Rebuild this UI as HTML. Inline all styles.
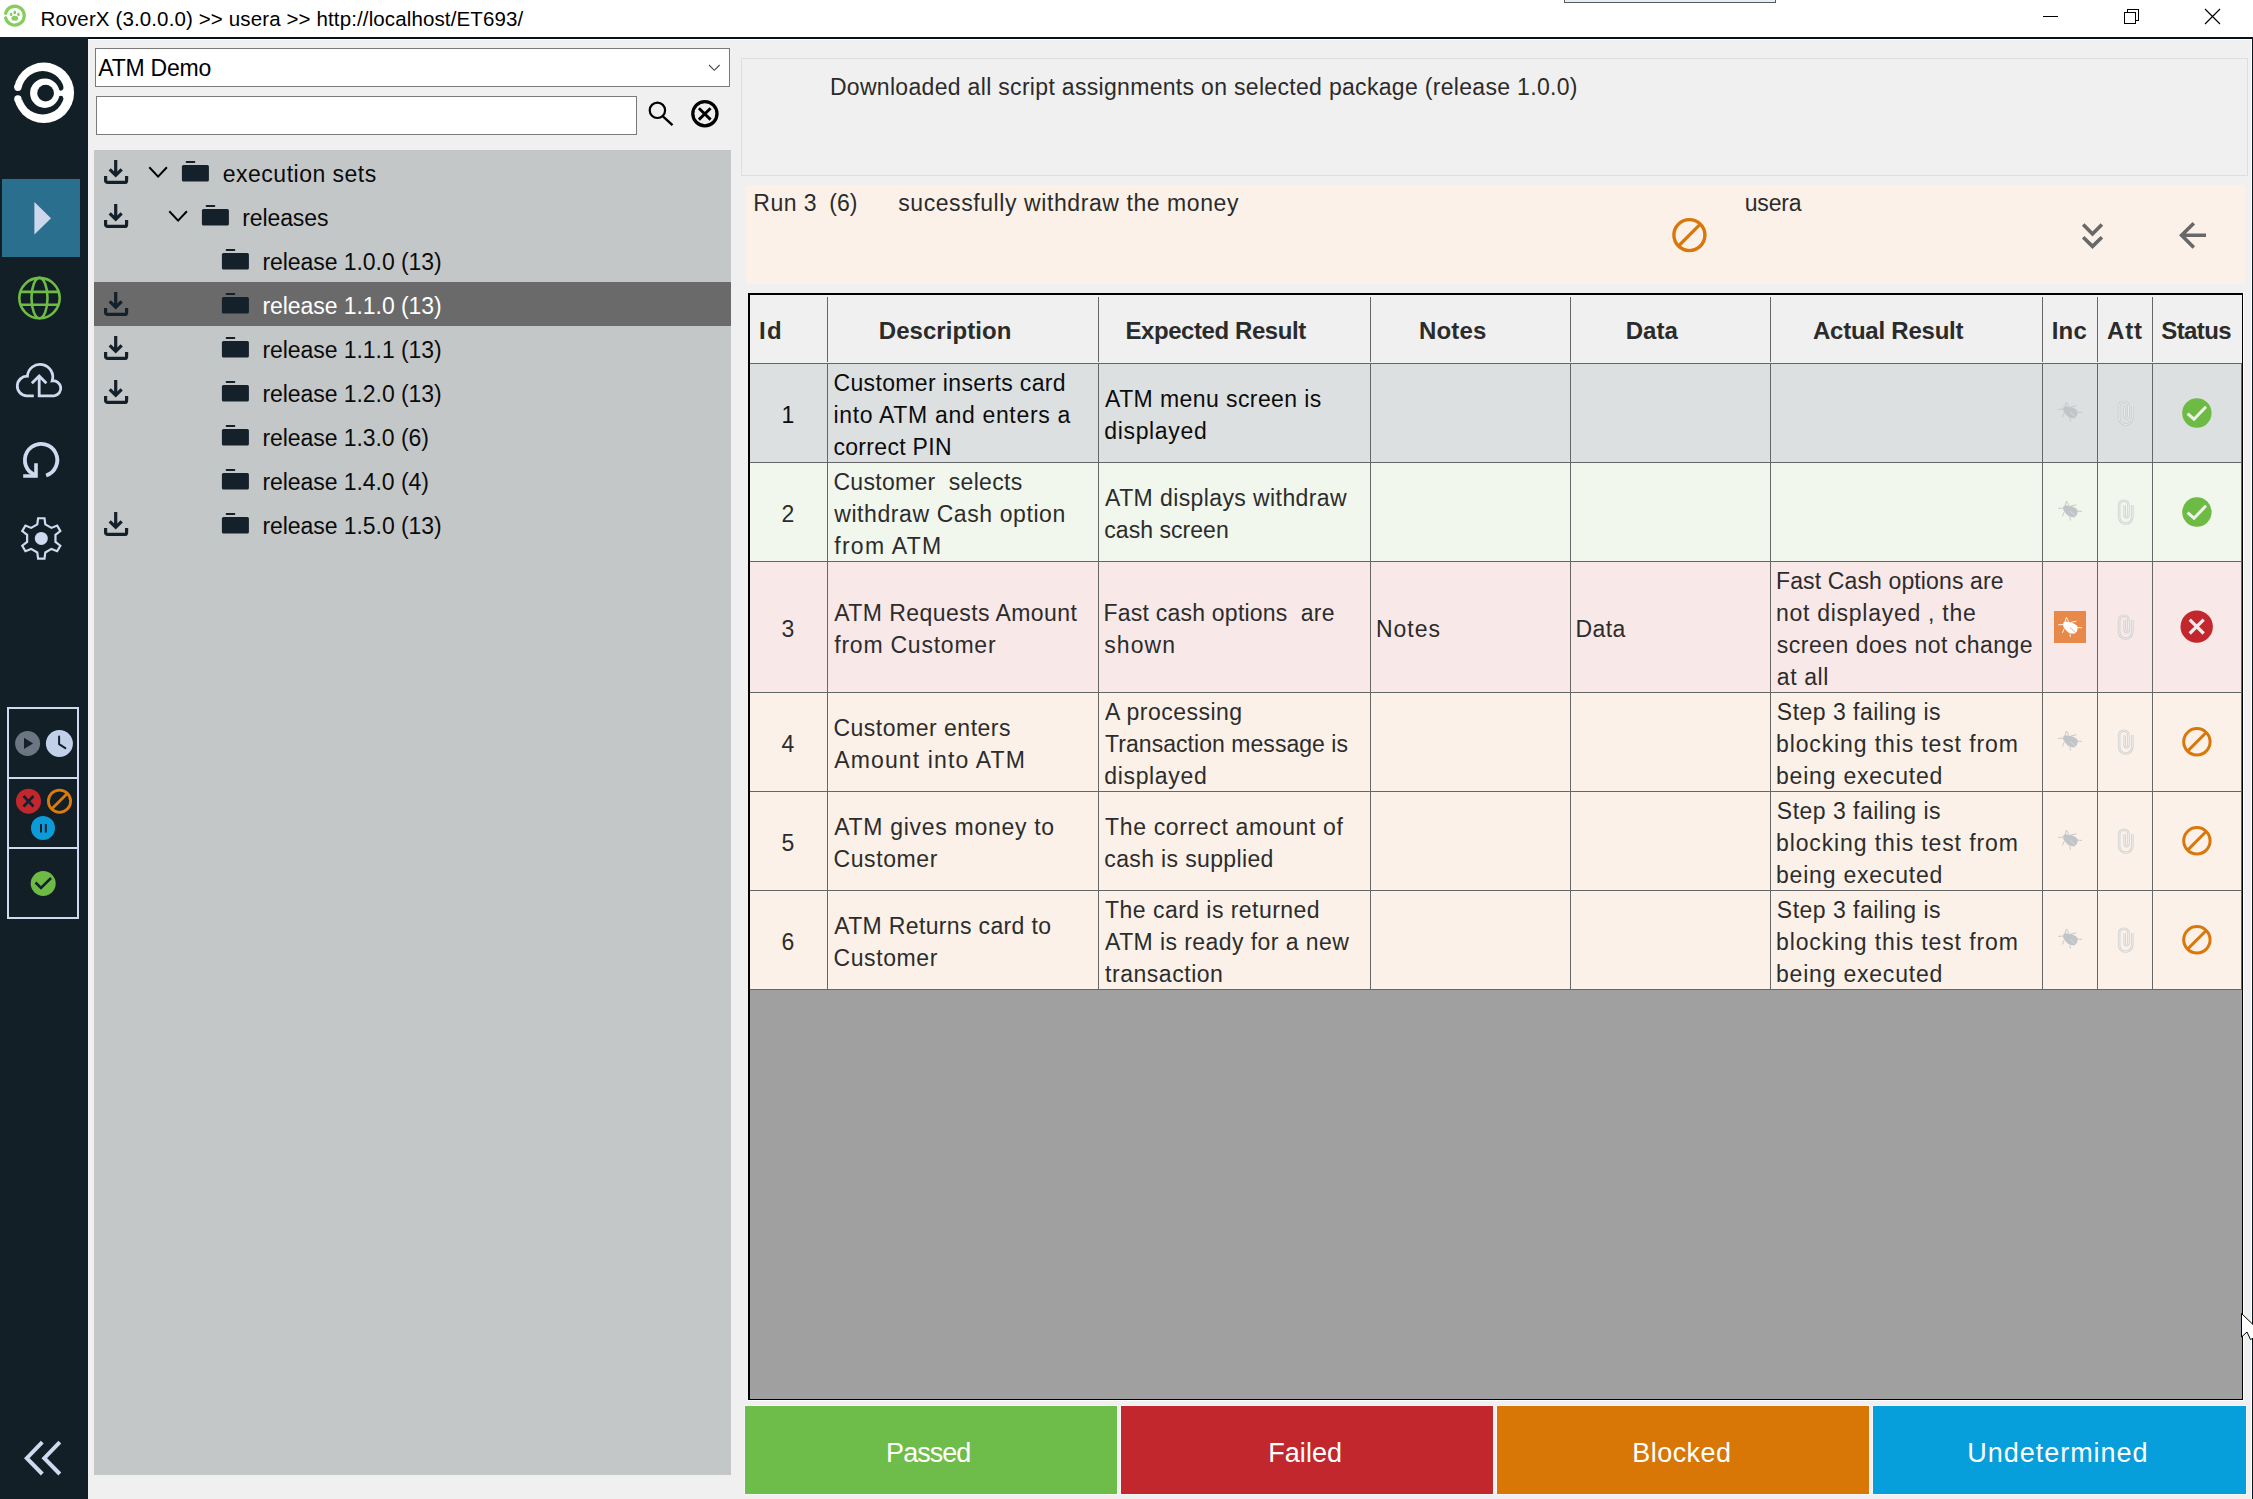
<!DOCTYPE html>
<html lang="en"><head><meta charset="utf-8"><title>RoverX</title>
<style>
html,body{margin:0;padding:0;background:#f0f0f0;}
body{width:2253px;height:1499px;overflow:hidden;font-family:'Liberation Sans',sans-serif;}
#app{position:relative;width:2253px;height:1499px;background:#f0f0f0;overflow:hidden;}
#app div,#app svg{position:absolute;box-sizing:border-box;}
.t{position:absolute;white-space:pre;font-family:'Liberation Sans',sans-serif;}
.vl{width:1px;background:#666;}
.hl{height:1px;background:#666;}

</style></head>
<body>
<div id="app">
<!-- title bar -->
<div style="left:0;top:0;width:2253px;height:37px;background:#fff"></div>
<div style="left:0;top:37px;width:2253px;height:2px;background:#06121b"></div>
<div style="left:88px;top:39px;width:2164px;height:1px;background:#fff"></div>
<div style="left:2251px;top:39px;width:1px;height:1460px;background:#fff"></div>
<div style="left:2252px;top:37px;width:1px;height:1462px;background:#0a161e"></div>
<div style="left:1564px;top:0;width:212px;height:3px;background:#e6eefb;border:1px solid #5a5a5a;border-top:none"></div>
<!-- sidebar -->
<div style="left:0;top:37px;width:88px;height:1462px;background:#131f26"></div>
<div style="left:2px;top:179px;width:78px;height:78px;background:#2b6f8f"></div>
<!-- combo + search -->
<div style="left:95px;top:48px;width:635px;height:39px;background:#fff;border:1px solid #7a7a7a"></div>
<div style="left:96px;top:96px;width:541px;height:39px;background:#fff;border:1px solid #7a7a7a"></div>
<!-- tree panel -->
<div style="left:94px;top:150px;width:637px;height:1325px;background:#c4c7c8"></div>
<div style="left:94px;top:282px;width:637px;height:44px;background:#6a6a6a"></div>
<!-- message panel -->
<div style="left:741px;top:58px;width:1507px;height:118px;border:1px solid #dedede;background:#f0f0f0"></div>
<!-- run panel -->
<div style="left:746px;top:185px;width:1499px;height:99px;background:#fbf1e8"></div>
<!-- grid -->
<div id="grid" style="left:748px;top:293px;width:1495px;height:1107px;background:#a0a0a0;border:1px solid #000;border-left-width:2px;border-top-width:2px"></div>
<div style="left:748px;top:1400px;width:1496px;height:1px;background:#fff"></div>
<div style="left:2243px;top:293px;width:1px;height:1108px;background:#fff"></div>
<div style="left:750px;top:295px;width:1492px;height:68px;background:#f0f0f0"></div>
<div style="left:750px;top:364px;width:1492px;height:98px;background:#dde0e1"></div>
<div style="left:750px;top:463px;width:1492px;height:98px;background:#f1f7ec"></div>
<div style="left:750px;top:562px;width:1492px;height:130px;background:#f8e8e8"></div>
<div style="left:750px;top:693px;width:1492px;height:98px;background:#fbf1e8"></div>
<div style="left:750px;top:792px;width:1492px;height:98px;background:#fbf1e8"></div>
<div style="left:750px;top:891px;width:1492px;height:98px;background:#fbf1e8"></div>
<!-- grid h-lines -->
<div class="hl" style="left:750px;top:363px;width:1492px"></div>
<div class="hl" style="left:750px;top:462px;width:1492px"></div>
<div class="hl" style="left:750px;top:561px;width:1492px"></div>
<div class="hl" style="left:750px;top:692px;width:1492px"></div>
<div class="hl" style="left:750px;top:791px;width:1492px"></div>
<div class="hl" style="left:750px;top:890px;width:1492px"></div>
<div class="hl" style="left:750px;top:989px;width:1492px"></div>
<!-- grid v-lines: header (inset) -->
<div class="vl" style="left:827px;top:297px;height:65px"></div>
<div class="vl" style="left:1098px;top:297px;height:65px"></div>
<div class="vl" style="left:1370px;top:297px;height:65px"></div>
<div class="vl" style="left:1570px;top:297px;height:65px"></div>
<div class="vl" style="left:1770px;top:297px;height:65px"></div>
<div class="vl" style="left:2042px;top:297px;height:65px"></div>
<div class="vl" style="left:2097px;top:297px;height:65px"></div>
<div class="vl" style="left:2152px;top:297px;height:65px"></div>
<!-- grid v-lines: body -->
<div class="vl" style="left:827px;top:364px;height:626px"></div>
<div class="vl" style="left:1098px;top:364px;height:626px"></div>
<div class="vl" style="left:1370px;top:364px;height:626px"></div>
<div class="vl" style="left:1570px;top:364px;height:626px"></div>
<div class="vl" style="left:1770px;top:364px;height:626px"></div>
<div class="vl" style="left:2042px;top:364px;height:626px"></div>
<div class="vl" style="left:2097px;top:364px;height:626px"></div>
<div class="vl" style="left:2152px;top:364px;height:626px"></div>
<div class="vl" style="left:2241px;top:364px;height:626px"></div>
<!-- orange inc square -->
<div style="left:2054px;top:611px;width:32px;height:32px;background:#e8894a"></div>
<!-- buttons -->
<div style="left:745px;top:1406px;width:372px;height:88px;background:#6ebc4a;box-shadow:0 0 0 1px #f8f5f7"></div>
<div style="left:1121px;top:1406px;width:372px;height:88px;background:#c1272d;box-shadow:0 0 0 1px #f8f5f7"></div>
<div style="left:1497px;top:1406px;width:372px;height:88px;background:#d97706;box-shadow:0 0 0 1px #f8f5f7"></div>
<div style="left:1873px;top:1406px;width:373px;height:88px;background:#069edb;box-shadow:0 0 0 1px #f8f5f7"></div>

<svg width="2253" height="1499" viewBox="0 0 2253 1499" style="left:0;top:0">
<path d="M5.68 13.43 A9.4 9.4 0 1 1 5.68 17.97" fill="none" stroke="#86cc5f" stroke-width="3.3" stroke-linecap="round"/>
<g fill="#86cc5f"><ellipse cx="14.8" cy="18.3" rx="3.4" ry="2.5"/><ellipse cx="11.1" cy="14.4" rx="1.3" ry="1.8"/><ellipse cx="14.8" cy="12.4" rx="1.4" ry="1.9"/><ellipse cx="18.4" cy="14.4" rx="1.3" ry="1.8"/></g>
<g stroke="#000" stroke-width="1" fill="none" shape-rendering="crispEdges"><path d="M2043 16.5 H2058"/><rect x="2124.5" y="12.5" width="11" height="11"/><path d="M2127.5 12.5 V9.5 H2138.5 V20.5 H2135.5"/></g>
<path d="M2205 9 L2220 24 M2220 9 L2205 24" stroke="#000" stroke-width="1.2" fill="none"/>
<g>
<circle cx="43.85" cy="92.8" r="30.2" fill="#fff"/>
<circle cx="42.7" cy="92.8" r="21.7" fill="#131f26"/>
<rect x="12" y="87.2" width="10" height="12.4" fill="#131f26"/>
<circle cx="17.9" cy="87.3" r="3.7" fill="#fff"/><circle cx="17.9" cy="98.9" r="3.7" fill="#fff"/>
<path d="M44.8 93.2 L66 86.8 L66 99.6 Z" fill="#fff"/>
<circle cx="60.8" cy="88.2" r="2.45" fill="#131f26"/><circle cx="60.8" cy="98.2" r="2.45" fill="#131f26"/>
<circle cx="44.8" cy="93.2" r="14.7" fill="#fff"/>
<circle cx="45.6" cy="93.2" r="8.35" fill="#131f26"/>
</g>
<path d="M34.4 202 L51 218.2 L34.4 234.4 Z" fill="#cdd8ec"/>
<g fill="none" stroke="#6dbd45" stroke-width="2.6"><circle cx="39.5" cy="298.1" r="20.2"/><ellipse cx="39.5" cy="298.1" rx="8" ry="20.2"/><path d="M20.5 291.9 H58.5 M20.5 304.7 H58.5"/></g>
<path d="M33.8 395.8 H26.8 A9.8 9.8 0 0 1 27.4 376.2 A12.7 12.7 0 1 1 52.2 380.8 A7.5 7.5 0 1 1 54.2 395.8 H39.2 V376.6 M31.8 383.2 L39.2 376 L46.4 383.2" fill="none" stroke="#cfdaf0" stroke-width="2.8" stroke-linejoin="miter"/>
<path d="M46.11 475.51 A16.2 16.2 0 1 0 29.64 471.56 L36 476" fill="none" stroke="#cfdaf0" stroke-width="3.8"/>
<path d="M36 463.2 V476 H23.2" fill="none" stroke="#cfdaf0" stroke-width="3.6" stroke-linecap="butt" stroke-linejoin="miter"/>
<path d="M37.28 524.37 L38.11 518.25 L44.49 518.25 L45.32 524.37 L51.44 527.90 L57.15 525.56 L60.35 531.09 L55.47 534.87 L55.47 541.93 L60.35 545.71 L57.15 551.24 L51.44 548.90 L45.32 552.43 L44.49 558.55 L38.11 558.55 L37.28 552.43 L31.16 548.90 L25.45 551.24 L22.25 545.71 L27.13 541.93 L27.13 534.87 L22.25 531.09 L25.45 525.56 L31.16 527.90 Z" fill="none" stroke="#cfdaf0" stroke-width="2.2" stroke-linejoin="miter"/>
<circle cx="41.3" cy="538.4" r="6.5" fill="#cfdaf0"/>
<g fill="none" stroke="#cfdaf0" stroke-width="2" shape-rendering="crispEdges"><rect x="8" y="708" width="70" height="210"/><path d="M8 778 H78 M8 848 H78"/></g>
<circle cx="27.6" cy="743.5" r="12.5" fill="#6b7682"/><path d="M24 737.8 L33.1 743.5 L24 749.1 Z" fill="#14212a"/>
<circle cx="59.4" cy="743.5" r="13.5" fill="#c3d0ea"/><path d="M59.1 736.4 V744.2 L65.3 748.2" fill="none" stroke="#14212a" stroke-width="2" stroke-linecap="round" stroke-linejoin="round"/>
<circle cx="28.5" cy="801.2" r="12.5" fill="#c1272d"/><path d="M23.5 796 L33.5 806.5 M33.5 796 L23.5 806.5" stroke="#14212a" stroke-width="2.6" fill="none"/>
<circle cx="59.5" cy="801.2" r="11.1" fill="none" stroke="#dc7a0a" stroke-width="2.8"/><path d="M51.7 809 L67.3 793.4" stroke="#dc7a0a" stroke-width="2.8"/>
<circle cx="43" cy="828" r="12" fill="#0a9bd8"/><path d="M41 824 V832.5 M45.8 824 V832.5" stroke="#14212a" stroke-width="2" fill="none"/>
<circle cx="43.2" cy="883.5" r="12.5" fill="#6dbb45"/><path d="M35.5 882.5 L41 888 L51 878" stroke="#14212a" stroke-width="2.6" fill="none"/>
<path d="M42.3 1442.2 L26.8 1458.2 L42.3 1474 M59.8 1442.2 L44.3 1458.2 L59.8 1474" fill="none" stroke="#cfdaf0" stroke-width="4" stroke-linejoin="miter"/>
<path d="M709 65 L714.3 70.3 L719.6 65" fill="none" stroke="#444" stroke-width="1.1"/>
<circle cx="657.4" cy="110.3" r="7.7" fill="none" stroke="#000" stroke-width="2.2"/><path d="M662.9 116.3 L672.5 125.1" stroke="#000" stroke-width="2.4"/>
<circle cx="704.9" cy="113.7" r="12.1" fill="none" stroke="#000" stroke-width="3.3"/><path d="M698.9 108.2 L710.6 119.6 M710.6 108.2 L698.9 119.6" stroke="#000" stroke-width="2.9"/>
<g fill="none" stroke="#14212a" stroke-width="3.2" transform="translate(104 160)"><path d="M11.7 0 V15"/><path d="M5.7 9.4 L11.7 15.2 L17.7 9.4"/><path d="M1.6 15.9 V20.4 a2 2 0 0 0 2 2 H20.6 a2 2 0 0 0 2 -2 V15.9"/></g>
<g fill="none" stroke="#14212a" stroke-width="3.2" transform="translate(104 204)"><path d="M11.7 0 V15"/><path d="M5.7 9.4 L11.7 15.2 L17.7 9.4"/><path d="M1.6 15.9 V20.4 a2 2 0 0 0 2 2 H20.6 a2 2 0 0 0 2 -2 V15.9"/></g>
<g fill="none" stroke="#14212a" stroke-width="3.2" transform="translate(104 292)"><path d="M11.7 0 V15"/><path d="M5.7 9.4 L11.7 15.2 L17.7 9.4"/><path d="M1.6 15.9 V20.4 a2 2 0 0 0 2 2 H20.6 a2 2 0 0 0 2 -2 V15.9"/></g>
<g fill="none" stroke="#14212a" stroke-width="3.2" transform="translate(104 336)"><path d="M11.7 0 V15"/><path d="M5.7 9.4 L11.7 15.2 L17.7 9.4"/><path d="M1.6 15.9 V20.4 a2 2 0 0 0 2 2 H20.6 a2 2 0 0 0 2 -2 V15.9"/></g>
<g fill="none" stroke="#14212a" stroke-width="3.2" transform="translate(104 380)"><path d="M11.7 0 V15"/><path d="M5.7 9.4 L11.7 15.2 L17.7 9.4"/><path d="M1.6 15.9 V20.4 a2 2 0 0 0 2 2 H20.6 a2 2 0 0 0 2 -2 V15.9"/></g>
<g fill="none" stroke="#14212a" stroke-width="3.2" transform="translate(104 512)"><path d="M11.7 0 V15"/><path d="M5.7 9.4 L11.7 15.2 L17.7 9.4"/><path d="M1.6 15.9 V20.4 a2 2 0 0 0 2 2 H20.6 a2 2 0 0 0 2 -2 V15.9"/></g>
<path d="M149.3 167.3 L158.10000000000002 176.60000000000002 L166.9 167.3" fill="none" stroke="#000" stroke-width="2"/>
<path d="M169.3 211.3 L178.10000000000002 220.60000000000002 L186.9 211.3" fill="none" stroke="#000" stroke-width="2"/>
<rect x="181.9" y="164.9" width="27" height="16.7" rx="1.6" fill="#14212a"/><rect x="185.6" y="161.0" width="9.7" height="2.1" rx="1" fill="#14212a"/>
<rect x="201.9" y="208.9" width="27" height="16.7" rx="1.6" fill="#14212a"/><rect x="205.6" y="205.0" width="9.7" height="2.1" rx="1" fill="#14212a"/>
<rect x="221.9" y="252.9" width="27" height="16.7" rx="1.6" fill="#14212a"/><rect x="225.6" y="249.0" width="9.7" height="2.1" rx="1" fill="#14212a"/>
<rect x="221.9" y="296.9" width="27" height="16.7" rx="1.6" fill="#14212a"/><rect x="225.6" y="293.0" width="9.7" height="2.1" rx="1" fill="#14212a"/>
<rect x="221.9" y="340.9" width="27" height="16.7" rx="1.6" fill="#14212a"/><rect x="225.6" y="337.0" width="9.7" height="2.1" rx="1" fill="#14212a"/>
<rect x="221.9" y="384.9" width="27" height="16.7" rx="1.6" fill="#14212a"/><rect x="225.6" y="381.0" width="9.7" height="2.1" rx="1" fill="#14212a"/>
<rect x="221.9" y="428.9" width="27" height="16.7" rx="1.6" fill="#14212a"/><rect x="225.6" y="425.0" width="9.7" height="2.1" rx="1" fill="#14212a"/>
<rect x="221.9" y="472.9" width="27" height="16.7" rx="1.6" fill="#14212a"/><rect x="225.6" y="469.0" width="9.7" height="2.1" rx="1" fill="#14212a"/>
<rect x="221.9" y="516.9" width="27" height="16.7" rx="1.6" fill="#14212a"/><rect x="225.6" y="513.0" width="9.7" height="2.1" rx="1" fill="#14212a"/>
<circle cx="1689.4" cy="235.1" r="15.5" fill="none" stroke="#d9770a" stroke-width="3.4"/><path d="M1678.5 246 L1700.3 224.2" stroke="#d9770a" stroke-width="3.2"/>
<path d="M2083.2 224.4 L2092.5 234 L2101.9 224.4 M2083.2 237.3 L2092.5 246.4 L2101.9 237.3" fill="none" stroke="#686868" stroke-width="3.6"/>
<path d="M2193.8 223.2 L2181.6 235.3 L2193.8 247.5 M2181.6 235.3 H2206" fill="none" stroke="#686868" stroke-width="3.6"/>
<g transform="translate(2070.3 411.8)"><path d="M-7 -4 Q-6.5 -5.8 -5.2 -5.6 Q-2 -5.6 0.6 -4.7 Q3.5 -3.8 5.9 -2.3 Q7.4 -1.2 7.6 0.4 L6.6 4.2 L3.9 6.6 Q0.5 6.5 -1.6 5.5 Q-4 3.8 -5.6 1.3 Q-7 -0.6 -7.2 -1.8 Z" fill="#c2c5c7"/><path d="M-5.2 -5.4 L-3.9 -9.8 L-1.6 -5.8 M0.6 -4.9 L6.1 -6 M7.5 0.4 L11.7 0.6 M-0.3 6.4 L0.1 9.9 M-6.1 1.3 L-7.9 5.7 M-7.2 -2.7 L-12.1 -2.4" fill="none" stroke="#c2c5c7" stroke-width="0.9"/><path d="M-0.3 0.4 L4.6 4.8" stroke="rgba(255,255,255,0.45)" stroke-width="0.7" fill="none"/></g>
<path d="M2132.3 406.09999999999997 V417.9 a6.6 6.6 0 0 1 -13.2 0 V406.3 a4.7 4.7 0 0 1 9.4 0 V416.3 a1.9 1.9 0 0 1 -3.8 0 V406.3" fill="none" stroke="#c4c4c4" stroke-width="2.5" opacity="0.75"/><path d="M2132.3 406.09999999999997 V417.9 a6.6 6.6 0 0 1 -13.2 0 V406.3 a4.7 4.7 0 0 1 9.4 0 V416.3 a1.9 1.9 0 0 1 -3.8 0 V406.3" fill="none" stroke="#f4f4f4" stroke-width="0.9" opacity="0.9"/>
<g transform="translate(2070.3 510.8)"><path d="M-7 -4 Q-6.5 -5.8 -5.2 -5.6 Q-2 -5.6 0.6 -4.7 Q3.5 -3.8 5.9 -2.3 Q7.4 -1.2 7.6 0.4 L6.6 4.2 L3.9 6.6 Q0.5 6.5 -1.6 5.5 Q-4 3.8 -5.6 1.3 Q-7 -0.6 -7.2 -1.8 Z" fill="#c2c5c7"/><path d="M-5.2 -5.4 L-3.9 -9.8 L-1.6 -5.8 M0.6 -4.9 L6.1 -6 M7.5 0.4 L11.7 0.6 M-0.3 6.4 L0.1 9.9 M-6.1 1.3 L-7.9 5.7 M-7.2 -2.7 L-12.1 -2.4" fill="none" stroke="#c2c5c7" stroke-width="0.9"/><path d="M-0.3 0.4 L4.6 4.8" stroke="rgba(255,255,255,0.45)" stroke-width="0.7" fill="none"/></g>
<path d="M2132.3 505.09999999999997 V516.9 a6.6 6.6 0 0 1 -13.2 0 V505.3 a4.7 4.7 0 0 1 9.4 0 V515.3 a1.9 1.9 0 0 1 -3.8 0 V505.3" fill="none" stroke="#c4c4c4" stroke-width="2.5" opacity="0.75"/><path d="M2132.3 505.09999999999997 V516.9 a6.6 6.6 0 0 1 -13.2 0 V505.3 a4.7 4.7 0 0 1 9.4 0 V515.3 a1.9 1.9 0 0 1 -3.8 0 V505.3" fill="none" stroke="#f4f4f4" stroke-width="0.9" opacity="0.9"/>
<g transform="translate(2070.3 627.2)"><path d="M-7 -4 Q-6.5 -5.8 -5.2 -5.6 Q-2 -5.6 0.6 -4.7 Q3.5 -3.8 5.9 -2.3 Q7.4 -1.2 7.6 0.4 L6.6 4.2 L3.9 6.6 Q0.5 6.5 -1.6 5.5 Q-4 3.8 -5.6 1.3 Q-7 -0.6 -7.2 -1.8 Z" fill="#ffffff"/><path d="M-5.2 -5.4 L-3.9 -9.8 L-1.6 -5.8 M0.6 -4.9 L6.1 -6 M7.5 0.4 L11.7 0.6 M-0.3 6.4 L0.1 9.9 M-6.1 1.3 L-7.9 5.7 M-7.2 -2.7 L-12.1 -2.4" fill="none" stroke="#ffffff" stroke-width="0.9"/><path d="M-0.3 0.4 L4.6 4.8" stroke="#e8894a" stroke-width="0.7" fill="none"/></g>
<path d="M2132.3 620.1 V631.9000000000001 a6.6 6.6 0 0 1 -13.2 0 V620.3000000000001 a4.7 4.7 0 0 1 9.4 0 V630.3000000000001 a1.9 1.9 0 0 1 -3.8 0 V620.3000000000001" fill="none" stroke="#c4c4c4" stroke-width="2.5" opacity="0.75"/><path d="M2132.3 620.1 V631.9000000000001 a6.6 6.6 0 0 1 -13.2 0 V620.3000000000001 a4.7 4.7 0 0 1 9.4 0 V630.3000000000001 a1.9 1.9 0 0 1 -3.8 0 V620.3000000000001" fill="none" stroke="#f4f4f4" stroke-width="0.9" opacity="0.9"/>
<g transform="translate(2070.3 740.8)"><path d="M-7 -4 Q-6.5 -5.8 -5.2 -5.6 Q-2 -5.6 0.6 -4.7 Q3.5 -3.8 5.9 -2.3 Q7.4 -1.2 7.6 0.4 L6.6 4.2 L3.9 6.6 Q0.5 6.5 -1.6 5.5 Q-4 3.8 -5.6 1.3 Q-7 -0.6 -7.2 -1.8 Z" fill="#c2c5c7"/><path d="M-5.2 -5.4 L-3.9 -9.8 L-1.6 -5.8 M0.6 -4.9 L6.1 -6 M7.5 0.4 L11.7 0.6 M-0.3 6.4 L0.1 9.9 M-6.1 1.3 L-7.9 5.7 M-7.2 -2.7 L-12.1 -2.4" fill="none" stroke="#c2c5c7" stroke-width="0.9"/><path d="M-0.3 0.4 L4.6 4.8" stroke="rgba(255,255,255,0.45)" stroke-width="0.7" fill="none"/></g>
<path d="M2132.3 735.1 V746.9000000000001 a6.6 6.6 0 0 1 -13.2 0 V735.3000000000001 a4.7 4.7 0 0 1 9.4 0 V745.3000000000001 a1.9 1.9 0 0 1 -3.8 0 V735.3000000000001" fill="none" stroke="#c4c4c4" stroke-width="2.5" opacity="0.75"/><path d="M2132.3 735.1 V746.9000000000001 a6.6 6.6 0 0 1 -13.2 0 V735.3000000000001 a4.7 4.7 0 0 1 9.4 0 V745.3000000000001 a1.9 1.9 0 0 1 -3.8 0 V735.3000000000001" fill="none" stroke="#f4f4f4" stroke-width="0.9" opacity="0.9"/>
<g transform="translate(2070.3 839.8)"><path d="M-7 -4 Q-6.5 -5.8 -5.2 -5.6 Q-2 -5.6 0.6 -4.7 Q3.5 -3.8 5.9 -2.3 Q7.4 -1.2 7.6 0.4 L6.6 4.2 L3.9 6.6 Q0.5 6.5 -1.6 5.5 Q-4 3.8 -5.6 1.3 Q-7 -0.6 -7.2 -1.8 Z" fill="#c2c5c7"/><path d="M-5.2 -5.4 L-3.9 -9.8 L-1.6 -5.8 M0.6 -4.9 L6.1 -6 M7.5 0.4 L11.7 0.6 M-0.3 6.4 L0.1 9.9 M-6.1 1.3 L-7.9 5.7 M-7.2 -2.7 L-12.1 -2.4" fill="none" stroke="#c2c5c7" stroke-width="0.9"/><path d="M-0.3 0.4 L4.6 4.8" stroke="rgba(255,255,255,0.45)" stroke-width="0.7" fill="none"/></g>
<path d="M2132.3 834.1 V845.9000000000001 a6.6 6.6 0 0 1 -13.2 0 V834.3000000000001 a4.7 4.7 0 0 1 9.4 0 V844.3000000000001 a1.9 1.9 0 0 1 -3.8 0 V834.3000000000001" fill="none" stroke="#c4c4c4" stroke-width="2.5" opacity="0.75"/><path d="M2132.3 834.1 V845.9000000000001 a6.6 6.6 0 0 1 -13.2 0 V834.3000000000001 a4.7 4.7 0 0 1 9.4 0 V844.3000000000001 a1.9 1.9 0 0 1 -3.8 0 V834.3000000000001" fill="none" stroke="#f4f4f4" stroke-width="0.9" opacity="0.9"/>
<g transform="translate(2070.3 938.8)"><path d="M-7 -4 Q-6.5 -5.8 -5.2 -5.6 Q-2 -5.6 0.6 -4.7 Q3.5 -3.8 5.9 -2.3 Q7.4 -1.2 7.6 0.4 L6.6 4.2 L3.9 6.6 Q0.5 6.5 -1.6 5.5 Q-4 3.8 -5.6 1.3 Q-7 -0.6 -7.2 -1.8 Z" fill="#c2c5c7"/><path d="M-5.2 -5.4 L-3.9 -9.8 L-1.6 -5.8 M0.6 -4.9 L6.1 -6 M7.5 0.4 L11.7 0.6 M-0.3 6.4 L0.1 9.9 M-6.1 1.3 L-7.9 5.7 M-7.2 -2.7 L-12.1 -2.4" fill="none" stroke="#c2c5c7" stroke-width="0.9"/><path d="M-0.3 0.4 L4.6 4.8" stroke="rgba(255,255,255,0.45)" stroke-width="0.7" fill="none"/></g>
<path d="M2132.3 933.1 V944.9000000000001 a6.6 6.6 0 0 1 -13.2 0 V933.3000000000001 a4.7 4.7 0 0 1 9.4 0 V943.3000000000001 a1.9 1.9 0 0 1 -3.8 0 V933.3000000000001" fill="none" stroke="#c4c4c4" stroke-width="2.5" opacity="0.75"/><path d="M2132.3 933.1 V944.9000000000001 a6.6 6.6 0 0 1 -13.2 0 V933.3000000000001 a4.7 4.7 0 0 1 9.4 0 V943.3000000000001 a1.9 1.9 0 0 1 -3.8 0 V933.3000000000001" fill="none" stroke="#f4f4f4" stroke-width="0.9" opacity="0.9"/>
<circle cx="2196.9" cy="413" r="14.7" fill="#6dbb45"/><path d="M2187.6 413.6 L2194 419.2 L2206 406.8" fill="none" stroke="#eef4ea" stroke-width="3"/>
<circle cx="2196.9" cy="512" r="14.7" fill="#6dbb45"/><path d="M2187.6 512.6 L2194 518.2 L2206 505.8" fill="none" stroke="#eef4ea" stroke-width="3"/>
<circle cx="2196.7" cy="626.6" r="16.2" fill="#c1272d"/><path d="M2189.7 619.7 L2203.7 633.5 M2203.7 619.7 L2189.7 633.5" stroke="#f7eaea" stroke-width="3.2" fill="none"/>
<circle cx="2196.9" cy="741.8" r="13.2" fill="none" stroke="#d9770a" stroke-width="3"/><path d="M2187.6 751.0999999999999 L2206.2 732.5" stroke="#d9770a" stroke-width="3"/>
<circle cx="2196.9" cy="840.8" r="13.2" fill="none" stroke="#d9770a" stroke-width="3"/><path d="M2187.6 850.0999999999999 L2206.2 831.5" stroke="#d9770a" stroke-width="3"/>
<circle cx="2196.9" cy="939.8" r="13.2" fill="none" stroke="#d9770a" stroke-width="3"/><path d="M2187.6 949.0999999999999 L2206.2 930.5" stroke="#d9770a" stroke-width="3"/>
<path d="M2241.5 1313.5 V1337 L2247 1332 L2250.5 1339.5 L2253.5 1338 V1325 Z" fill="#fff" stroke="#000" stroke-width="1"/>
</svg>
<span class="t" style="left:40.54px;top:9px;font-size:20.5px;line-height:20.5px;color:#000;letter-spacing:0.125px;">RoverX (3.0.0.0) &gt;&gt; usera &gt;&gt; http://localhost/ET693/</span>
<span class="t" style="left:98.24px;top:57px;font-size:23px;line-height:23px;color:#000;letter-spacing:-0.229px;">ATM Demo</span>
<span class="t" style="left:222.82px;top:163px;font-size:23px;line-height:23px;color:#0b0b0b;letter-spacing:0.492px;">execution sets</span>
<span class="t" style="left:242.30px;top:207px;font-size:23px;line-height:23px;color:#0b0b0b;letter-spacing:-0.114px;">releases</span>
<span class="t" style="left:262.40px;top:251px;font-size:23px;line-height:23px;color:#0b0b0b;letter-spacing:-0.056px;">release 1.0.0 (13)</span>
<span class="t" style="left:262.40px;top:295px;font-size:23px;line-height:23px;color:#ffffff;letter-spacing:-0.056px;">release 1.1.0 (13)</span>
<span class="t" style="left:262.40px;top:339px;font-size:23px;line-height:23px;color:#0b0b0b;letter-spacing:-0.056px;">release 1.1.1 (13)</span>
<span class="t" style="left:262.40px;top:383px;font-size:23px;line-height:23px;color:#0b0b0b;letter-spacing:-0.056px;">release 1.2.0 (13)</span>
<span class="t" style="left:262.40px;top:427px;font-size:23px;line-height:23px;color:#0b0b0b;letter-spacing:-0.060px;">release 1.3.0 (6)</span>
<span class="t" style="left:262.40px;top:471px;font-size:23px;line-height:23px;color:#0b0b0b;letter-spacing:-0.060px;">release 1.4.0 (4)</span>
<span class="t" style="left:262.40px;top:515px;font-size:23px;line-height:23px;color:#0b0b0b;letter-spacing:-0.056px;">release 1.5.0 (13)</span>
<span class="t" style="left:829.88px;top:76px;font-size:23px;line-height:23px;color:#2b2b2b;letter-spacing:0.315px;">Downloaded all script assignments on selected package (release 1.0.0)</span>
<span class="t" style="left:753.36px;top:192px;font-size:23px;line-height:23px;color:#2b2b2b;letter-spacing:0.460px;">Run 3</span>
<span class="t" style="left:829.30px;top:192px;font-size:23px;line-height:23px;color:#2b2b2b;">(6)</span>
<span class="t" style="left:898.20px;top:192px;font-size:23px;line-height:23px;color:#2b2b2b;letter-spacing:0.582px;">sucessfully withdraw the money</span>
<span class="t" style="left:1744.78px;top:192px;font-size:23px;line-height:23px;color:#2b2b2b;letter-spacing:-0.200px;">usera</span>
<span class="t" style="left:758.92px;top:319px;font-size:24px;line-height:24px;color:#2b2b2b;font-weight:700;letter-spacing:1.500px;">Id</span>
<span class="t" style="left:878.78px;top:319px;font-size:24px;line-height:24px;color:#2b2b2b;font-weight:700;letter-spacing:0.056px;">Description</span>
<span class="t" style="left:1125.40px;top:319px;font-size:24px;line-height:24px;color:#2b2b2b;font-weight:700;letter-spacing:-0.417px;">Expected Result</span>
<span class="t" style="left:1418.92px;top:319px;font-size:24px;line-height:24px;color:#2b2b2b;font-weight:700;letter-spacing:0.220px;">Notes</span>
<span class="t" style="left:1625.64px;top:319px;font-size:24px;line-height:24px;color:#2b2b2b;font-weight:700;letter-spacing:0.080px;">Data</span>
<span class="t" style="left:1812.96px;top:319px;font-size:24px;line-height:24px;color:#2b2b2b;font-weight:700;letter-spacing:-0.233px;">Actual Result</span>
<span class="t" style="left:2051.64px;top:319px;font-size:24px;line-height:24px;color:#2b2b2b;font-weight:700;letter-spacing:0.280px;">Inc</span>
<span class="t" style="left:2107.10px;top:319px;font-size:24px;line-height:24px;color:#2b2b2b;font-weight:700;letter-spacing:0.800px;">Att</span>
<span class="t" style="left:2161.30px;top:319px;font-size:24px;line-height:24px;color:#2b2b2b;font-weight:700;letter-spacing:-0.624px;">Status</span>
<span class="t" style="left:788.00px;top:404px;font-size:23px;line-height:23px;color:#0c0c0c;transform:translateX(-50%);">1</span>
<span class="t" style="left:788.00px;top:503px;font-size:23px;line-height:23px;color:#2c2c2c;transform:translateX(-50%);">2</span>
<span class="t" style="left:788.00px;top:618px;font-size:23px;line-height:23px;color:#2c2c2c;transform:translateX(-50%);">3</span>
<span class="t" style="left:788.00px;top:733px;font-size:23px;line-height:23px;color:#2c2c2c;transform:translateX(-50%);">4</span>
<span class="t" style="left:788.00px;top:832px;font-size:23px;line-height:23px;color:#2c2c2c;transform:translateX(-50%);">5</span>
<span class="t" style="left:788.00px;top:931px;font-size:23px;line-height:23px;color:#2c2c2c;transform:translateX(-50%);">6</span>
<span class="t" style="left:833.44px;top:372px;font-size:23px;line-height:23px;color:#0c0c0c;letter-spacing:0.360px;">Customer inserts card</span>
<span class="t" style="left:833.44px;top:404px;font-size:23px;line-height:23px;color:#0c0c0c;letter-spacing:0.676px;">into ATM and enters a</span>
<span class="t" style="left:833.44px;top:436px;font-size:23px;line-height:23px;color:#0c0c0c;letter-spacing:0.312px;">correct PIN</span>
<span class="t" style="left:1105.10px;top:388px;font-size:23px;line-height:23px;color:#0c0c0c;letter-spacing:0.414px;">ATM menu screen is</span>
<span class="t" style="left:1104.30px;top:420px;font-size:23px;line-height:23px;color:#0c0c0c;letter-spacing:0.650px;">displayed</span>
<span class="t" style="left:833.44px;top:471px;font-size:23px;line-height:23px;color:#2c2c2c;letter-spacing:0.290px;">Customer  selects</span>
<span class="t" style="left:834.24px;top:503px;font-size:23px;line-height:23px;color:#2c2c2c;letter-spacing:0.585px;">withdraw Cash option</span>
<span class="t" style="left:834.24px;top:535px;font-size:23px;line-height:23px;color:#2c2c2c;letter-spacing:1.291px;">from ATM</span>
<span class="t" style="left:1105.10px;top:487px;font-size:23px;line-height:23px;color:#2c2c2c;letter-spacing:0.404px;">ATM displays withdraw</span>
<span class="t" style="left:1104.30px;top:519px;font-size:23px;line-height:23px;color:#2c2c2c;letter-spacing:0.040px;">cash screen</span>
<span class="t" style="left:834.24px;top:602px;font-size:23px;line-height:23px;color:#2c2c2c;letter-spacing:0.440px;">ATM Requests Amount</span>
<span class="t" style="left:834.24px;top:634px;font-size:23px;line-height:23px;color:#2c2c2c;letter-spacing:0.773px;">from Customer</span>
<span class="t" style="left:1103.50px;top:602px;font-size:23px;line-height:23px;color:#2c2c2c;letter-spacing:0.225px;">Fast cash options  are</span>
<span class="t" style="left:1104.30px;top:634px;font-size:23px;line-height:23px;color:#2c2c2c;letter-spacing:1.040px;">shown</span>
<span class="t" style="left:1375.88px;top:618px;font-size:23px;line-height:23px;color:#2c2c2c;letter-spacing:1.040px;">Notes</span>
<span class="t" style="left:1575.50px;top:618px;font-size:23px;line-height:23px;color:#2c2c2c;letter-spacing:0.427px;">Data</span>
<span class="t" style="left:1776.02px;top:570px;font-size:23px;line-height:23px;color:#2c2c2c;letter-spacing:0.128px;">Fast Cash options are</span>
<span class="t" style="left:1776.02px;top:602px;font-size:23px;line-height:23px;color:#2c2c2c;letter-spacing:0.724px;">not displayed , the</span>
<span class="t" style="left:1776.82px;top:634px;font-size:23px;line-height:23px;color:#2c2c2c;letter-spacing:0.491px;">screen does not change</span>
<span class="t" style="left:1776.82px;top:666px;font-size:23px;line-height:23px;color:#2c2c2c;letter-spacing:0.592px;">at all</span>
<span class="t" style="left:833.44px;top:717px;font-size:23px;line-height:23px;color:#2c2c2c;letter-spacing:0.503px;">Customer enters</span>
<span class="t" style="left:834.24px;top:749px;font-size:23px;line-height:23px;color:#2c2c2c;letter-spacing:1.137px;">Amount into ATM</span>
<span class="t" style="left:1105.10px;top:701px;font-size:23px;line-height:23px;color:#2c2c2c;letter-spacing:0.480px;">A processing</span>
<span class="t" style="left:1105.10px;top:733px;font-size:23px;line-height:23px;color:#2c2c2c;letter-spacing:0.042px;">Transaction message is</span>
<span class="t" style="left:1104.30px;top:765px;font-size:23px;line-height:23px;color:#2c2c2c;letter-spacing:0.650px;">displayed</span>
<span class="t" style="left:1776.82px;top:701px;font-size:23px;line-height:23px;color:#2c2c2c;letter-spacing:0.480px;">Step 3 failing is</span>
<span class="t" style="left:1776.02px;top:733px;font-size:23px;line-height:23px;color:#2c2c2c;letter-spacing:0.880px;">blocking this test from</span>
<span class="t" style="left:1776.02px;top:765px;font-size:23px;line-height:23px;color:#2c2c2c;letter-spacing:0.788px;">being executed</span>
<span class="t" style="left:834.24px;top:816px;font-size:23px;line-height:23px;color:#2c2c2c;letter-spacing:0.706px;">ATM gives money to</span>
<span class="t" style="left:833.44px;top:848px;font-size:23px;line-height:23px;color:#2c2c2c;letter-spacing:0.606px;">Customer</span>
<span class="t" style="left:1105.10px;top:816px;font-size:23px;line-height:23px;color:#2c2c2c;letter-spacing:0.640px;">The correct amount of</span>
<span class="t" style="left:1104.30px;top:848px;font-size:23px;line-height:23px;color:#2c2c2c;letter-spacing:0.363px;">cash is supplied</span>
<span class="t" style="left:1776.82px;top:800px;font-size:23px;line-height:23px;color:#2c2c2c;letter-spacing:0.480px;">Step 3 failing is</span>
<span class="t" style="left:1776.02px;top:832px;font-size:23px;line-height:23px;color:#2c2c2c;letter-spacing:0.880px;">blocking this test from</span>
<span class="t" style="left:1776.02px;top:864px;font-size:23px;line-height:23px;color:#2c2c2c;letter-spacing:0.788px;">being executed</span>
<span class="t" style="left:834.24px;top:915px;font-size:23px;line-height:23px;color:#2c2c2c;letter-spacing:0.347px;">ATM Returns card to</span>
<span class="t" style="left:833.44px;top:947px;font-size:23px;line-height:23px;color:#2c2c2c;letter-spacing:0.606px;">Customer</span>
<span class="t" style="left:1105.10px;top:899px;font-size:23px;line-height:23px;color:#2c2c2c;letter-spacing:0.455px;">The card is returned</span>
<span class="t" style="left:1105.10px;top:931px;font-size:23px;line-height:23px;color:#2c2c2c;letter-spacing:0.423px;">ATM is ready for a new</span>
<span class="t" style="left:1105.10px;top:963px;font-size:23px;line-height:23px;color:#2c2c2c;letter-spacing:0.528px;">transaction</span>
<span class="t" style="left:1776.82px;top:899px;font-size:23px;line-height:23px;color:#2c2c2c;letter-spacing:0.480px;">Step 3 failing is</span>
<span class="t" style="left:1776.02px;top:931px;font-size:23px;line-height:23px;color:#2c2c2c;letter-spacing:0.880px;">blocking this test from</span>
<span class="t" style="left:1776.02px;top:963px;font-size:23px;line-height:23px;color:#2c2c2c;letter-spacing:0.788px;">being executed</span>
<span class="t" style="left:886.12px;top:1440px;font-size:27px;line-height:27px;color:#ffffff;letter-spacing:-0.976px;">Passed</span>
<span class="t" style="left:1268.26px;top:1440px;font-size:27px;line-height:27px;color:#ffffff;letter-spacing:0.048px;">Failed</span>
<span class="t" style="left:1632.26px;top:1440px;font-size:27px;line-height:27px;color:#ffffff;letter-spacing:0.453px;">Blocked</span>
<span class="t" style="left:1967.22px;top:1440px;font-size:27px;line-height:27px;color:#ffffff;letter-spacing:0.982px;">Undetermined</span>
</div>
</body></html>
